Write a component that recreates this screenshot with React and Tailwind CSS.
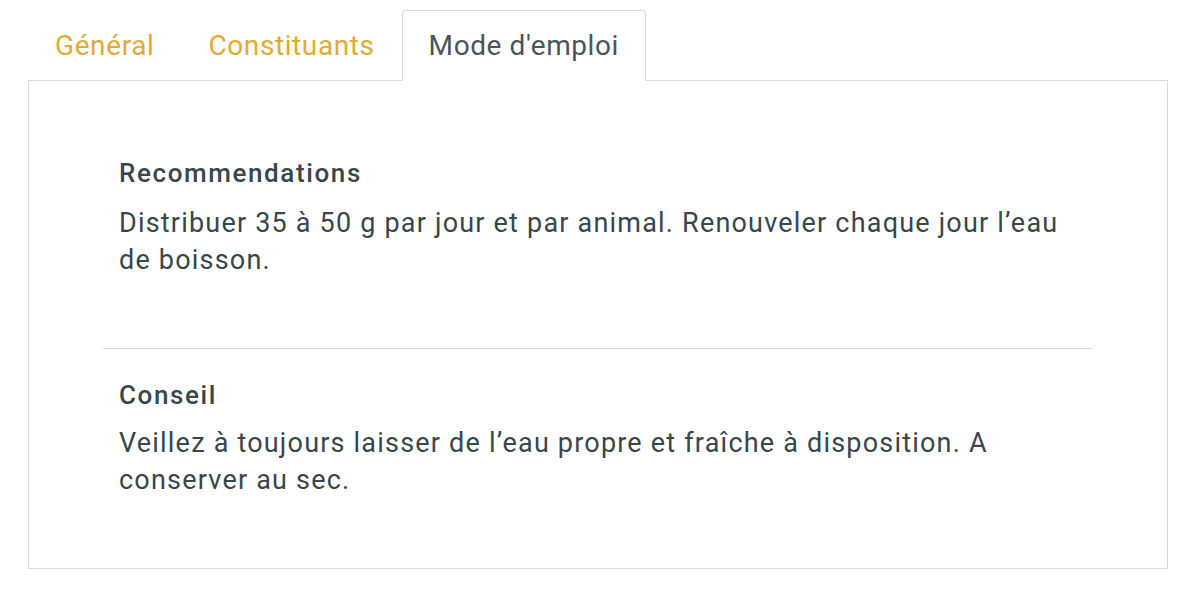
import React, { useState } from "react";

const tabs = ["Général", "Constituants", "Mode d'emploi"];

export default function App() {
  const [activeTab, setActiveTab] = useState("Mode d'emploi");

  return (
    <div className="min-h-screen bg-white pt-[10px] pl-[28px] pr-[32px] font-['Roboto',sans-serif] text-[#37474a]">
      {/* Tabs */}
      <div className="flex">
        {tabs.map((tab) => (
          <button
            key={tab}
            onClick={() => setActiveTab(tab)}
            className={`h-[71px] px-[26px] text-[28px] tracking-[0.6px] -mb-px rounded-t-[4px] border ${
              activeTab === tab
                ? "text-[#4a5558] bg-white border-[#d8dcdc] border-b-white"
                : "text-[#e2aa33] border-transparent"
            }`}
          >
            {tab}
          </button>
        ))}
      </div>

      {/* Panel */}
      <div className="border border-[#d8dcdc] h-[489px] px-[74px] pt-[77px]">
        <div className="px-[16px] pb-[69px] border-b border-[#d8dcdc]">
          <h3 className="text-[26px] font-medium tracking-[1.6px] leading-[30px] mb-[17px]">Recommendations</h3>
          <p className="text-[27px] tracking-[1.2px] leading-[37px]">
            Distribuer 35 à 50 g par jour et par animal. Renouveler chaque jour l’eau de boisson.
          </p>
        </div>
        <div className="px-[16px] pt-[31px]">
          <h3 className="text-[26px] font-medium tracking-[1.6px] leading-[30px] mb-[15px]">Conseil</h3>
          <p className="text-[27px] tracking-[1.2px] leading-[37px]">
            Veillez à toujours laisser de l’eau propre et fraîche à disposition. A conserver au sec.
          </p>
        </div>
      </div>
    </div>
  );
}
